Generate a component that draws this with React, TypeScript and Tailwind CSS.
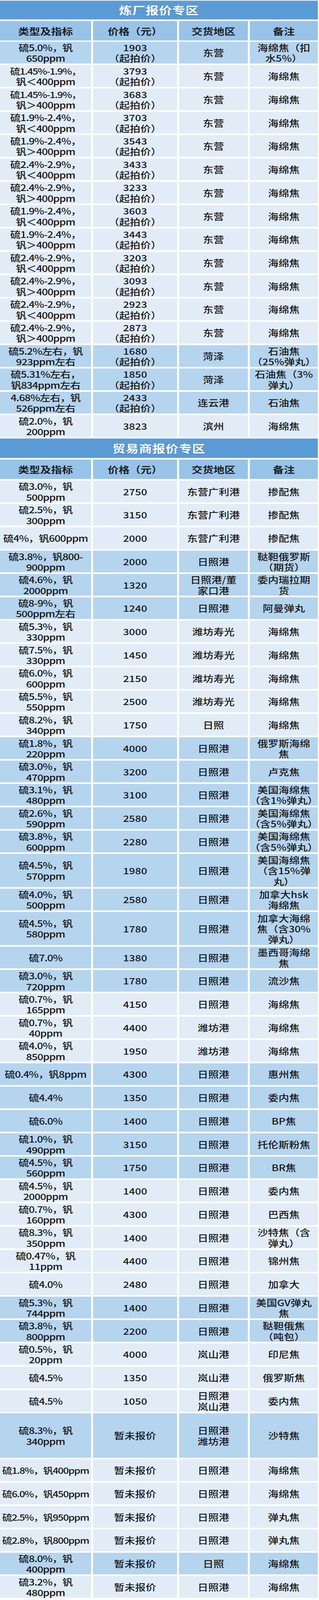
import React, { useLayoutEffect, useState } from 'react';

type Tone = 'm' | 'l';
type Row = { a: string[]; b: string[]; c: string[]; d: string[]; t: Tone; h?: 67 | 102 | 137 };

const QP = '（起拍价）';
const NA = ['暂未报价'];
const FULL_H = 4937;

const r = (a: string[], b: string[], c: string[], d: string[], t: Tone, h?: 67 | 102 | 137): Row => ({ a, b, c, d, t, h });

const refinery: Row[] = [
  r(['硫5.0%，钒', '650ppm'], ['1903', QP], ['东营'], ['海绵焦（扣', '水5%）'], 'm'),
  r(['硫1.45%-1.9%，', '钒＜400ppm'], ['3793', QP], ['东营'], ['海绵焦'], 'l'),
  r(['硫1.45%-1.9%，', '钒＞400ppm'], ['3683', QP], ['东营'], ['海绵焦'], 'l'),
  r(['硫1.9%-2.4%，', '钒＜400ppm'], ['3703', QP], ['东营'], ['海绵焦'], 'l'),
  r(['硫1.9%-2.4%，', '钒＞400ppm'], ['3543', QP], ['东营'], ['海绵焦'], 'l'),
  r(['硫2.4%-2.9%，', '钒＜400ppm'], ['3433', QP], ['东营'], ['海绵焦'], 'l'),
  r(['硫2.4%-2.9%，', '钒＞400ppm'], ['3233', QP], ['东营'], ['海绵焦'], 'l'),
  r(['硫1.9%-2.4%，', '钒＜400ppm'], ['3603', QP], ['东营'], ['海绵焦'], 'l'),
  r(['硫1.9%-2.4%，', '钒＞400ppm'], ['3443', QP], ['东营'], ['海绵焦'], 'l'),
  r(['硫2.4%-2.9%，', '钒＜400ppm'], ['3203', QP], ['东营'], ['海绵焦'], 'l'),
  r(['硫2.4%-2.9%，', '钒＞400ppm'], ['3093', QP], ['东营'], ['海绵焦'], 'l'),
  r(['硫2.4%-2.9%，', '钒＜400ppm'], ['2923', QP], ['东营'], ['海绵焦'], 'l'),
  r(['硫2.4%-2.9%，', '钒＞400ppm'], ['2873', QP], ['东营'], ['海绵焦'], 'l'),
  r(['硫5.2%左右，钒', '923ppm左右'], ['1680', QP], ['菏泽'], ['石油焦', '（25%弹丸）'], 'm'),
  r(['硫5.31%左右，', '钒834ppm左右'], ['1850', QP], ['菏泽'], ['石油焦（3%', '弹丸）'], 'm'),
  r(['4.68%左右，钒', '526ppm左右'], ['2433', QP], ['连云港'], ['石油焦'], 'm'),
  r(['硫2.0%，钒', '200ppm'], ['3823'], ['滨州'], ['海绵焦'], 'l'),
];

const RZ = ['日照港'];

const trader: Row[] = [
  r(['硫3.0%，钒', '500ppm'], ['2750'], ['东营广利港'], ['掺配焦'], 'l'),
  r(['硫2.5%，钒', '300ppm'], ['3150'], ['东营广利港'], ['掺配焦'], 'l'),
  r(['硫4%，钒600ppm'], ['2000'], ['东营广利港'], ['掺配焦'], 'l'),
  r(['硫3.8%，钒800-', '900ppm'], ['2000'], RZ, ['鞑靼俄罗斯', '（期货）'], 'm'),
  r(['硫4.6%，钒', '2000ppm'], ['1320'], ['日照港/董', '家口港'], ['委内瑞拉期', '货'], 'm'),
  r(['硫8-9%，钒', '500ppm左右'], ['1240'], RZ, ['阿曼弹丸'], 'm'),
  r(['硫5.3%，钒', '330ppm'], ['3000'], ['潍坊寿光'], ['海绵焦'], 'l'),
  r(['硫7.5%，钒', '330ppm'], ['1450'], ['潍坊寿光'], ['海绵焦'], 'l'),
  r(['硫6.0%，钒', '600ppm'], ['2150'], ['潍坊寿光'], ['海绵焦'], 'l'),
  r(['硫5.5%，钒', '550ppm'], ['2500'], ['潍坊寿光'], ['海绵焦'], 'l'),
  r(['硫8.2%，钒', '340ppm'], ['1750'], ['日照'], ['海绵焦'], 'l'),
  r(['硫1.8%，钒', '220ppm'], ['4000'], RZ, ['俄罗斯海绵', '焦'], 'm'),
  r(['硫3.0%，钒', '470ppm'], ['3200'], RZ, ['卢克焦'], 'm'),
  r(['硫3.1%，钒', '480ppm'], ['3100'], RZ, ['美国海绵焦', '（含1%弹丸）'], 'm'),
  r(['硫2.6%，钒', '590ppm'], ['2580'], RZ, ['美国海绵焦', '（含5%弹丸）'], 'm'),
  r(['硫3.8%，钒', '600ppm'], ['2280'], RZ, ['美国海绵焦', '（含5%弹丸）'], 'm'),
  r(['硫4.5%，钒', '570ppm'], ['1980'], RZ, ['美国海绵焦', '（含15%弹', '丸）'], 'm', 102),
  r(['硫4.0%，钒', '500ppm'], ['2580'], RZ, ['加拿大hsk', '海绵焦'], 'm'),
  r(['硫4.5%，钒', '580ppm'], ['1780'], RZ, ['加拿大海绵', '焦（含30%', '弹丸）'], 'm', 102),
  r(['硫7.0%'], ['1380'], RZ, ['墨西哥海绵', '焦'], 'm'),
  r(['硫3.0%，钒', '720ppm'], ['1780'], RZ, ['流沙焦'], 'm'),
  r(['硫0.7%，钒', '165ppm'], ['4150'], RZ, ['海绵焦'], 'l'),
  r(['硫0.7%，钒', '40ppm'], ['4400'], ['潍坊港'], ['海绵焦'], 'l'),
  r(['硫4.0%，钒', '850ppm'], ['1950'], ['潍坊港'], ['海绵焦'], 'l'),
  r(['硫0.4%，钒8ppm'], ['4300'], RZ, ['惠州焦'], 'm'),
  r(['硫4.4%'], ['1350'], RZ, ['委内焦'], 'm'),
  r(['硫6.0%'], ['1400'], RZ, ['BP焦'], 'm'),
  r(['硫1.0%，钒', '490ppm'], ['3150'], RZ, ['托伦斯粉焦'], 'm'),
  r(['硫4.5%，钒', '560ppm'], ['1750'], RZ, ['BR焦'], 'm'),
  r(['硫4.5%，钒', '2000ppm'], ['1400'], RZ, ['委内焦'], 'l'),
  r(['硫0.7%，钒', '160ppm'], ['4300'], RZ, ['巴西焦'], 'l'),
  r(['硫8.3%，钒', '350ppm'], ['1400'], RZ, ['沙特焦（含', '弹丸）'], 'l'),
  r(['硫0.47%，钒', '11ppm'], ['4400'], RZ, ['锦州焦'], 'l'),
  r(['硫4.0%'], ['2480'], RZ, ['加拿大'], 'l'),
  r(['硫5.3%，钒', '744ppm'], ['1400'], RZ, ['美国GV弹丸', '焦'], 'm'),
  r(['硫3.8%，钒', '800ppm'], ['2200'], RZ, ['鞑靼俄焦', '（吨包）'], 'm'),
  r(['硫0.5%，钒', '20ppm'], ['4000'], ['岚山港'], ['印尼焦'], 'l'),
  r(['硫4.5%'], ['1350'], ['岚山港'], ['俄罗斯焦'], 'l'),
  r(['硫4.5%'], ['1050'], ['日照港', '岚山港'], ['委内焦'], 'l'),
  r(['硫8.3%，钒', '340ppm'], NA, ['日照港', '潍坊港'], ['沙特焦'], 'm', 137),
  r(['硫1.8%，钒400ppm'], NA, RZ, ['海绵焦'], 'l'),
  r(['硫6.0%，钒450ppm'], NA, RZ, ['海绵焦'], 'l'),
  r(['硫2.5%，钒950ppm'], NA, RZ, ['弹丸焦'], 'l'),
  r(['硫2.8%，钒800ppm'], NA, RZ, ['弹丸焦'], 'l'),
  r(['硫8.0%，钒', '400ppm'], NA, ['日照'], ['海绵焦'], 'm'),
  r(['硫3.2%，钒', '480ppm'], NA, RZ, ['海绵焦'], 'l'),
];

const COLS = 'grid grid-cols-[233px_215px_176px_174px] gap-x-[5px] w-[813px] shrink-0';
const BG: Record<Tone, string> = { m: 'bg-[#b5d4ee]', l: 'bg-[#e1ecf7]' };

function lineClass(l: string, tight?: boolean) {
  if (!tight) return '';
  if (l.length >= 12) return 'text-[26px] tracking-[-1.5px]';
  return 'tracking-[-1px]';
}

function Cell({ lines, bg, tight, h }: { lines: string[]; bg: string; tight?: boolean; h: string }) {
  return (
    <div className={`${h} flex flex-col items-center justify-center text-center ${bg}`}>
      {lines.map((l, i) => (
        <span key={i} className={`block h-[33px] leading-[33px] whitespace-nowrap ${lineClass(l, tight)}`}>
          {l}
        </span>
      ))}
    </div>
  );
}

function DataRow({ row }: { row: Row }) {
  const bg = BG[row.t];
  const h = row.h === 102 ? 'h-[102px]' : row.h === 137 ? 'h-[137px]' : 'h-[67px]';
  return (
    <div className={`${COLS} ${h} text-[27px] font-medium text-[#151515]`}>
      <Cell lines={row.a} bg={bg} h={h} tight />
      <Cell lines={row.b} bg={bg} h={h} />
      <Cell lines={row.c} bg={bg} h={h} />
      <Cell lines={row.d} bg={bg} h={h} />
    </div>
  );
}

function Title({ text, h }: { text: string; h: string }) {
  return (
    <div
      className={`w-[813px] shrink-0 ${h} bg-[#5b9bd5] flex items-center justify-center text-white font-bold text-[33px] leading-[40px] tracking-[1px] [text-shadow:0_1px_2px_rgba(30,70,120,0.45)]`}
    >
      {text}
    </div>
  );
}

function Header() {
  const hb = 'h-[60px] flex items-center justify-center bg-[#98c3e8]';
  return (
    <div className={`${COLS} h-[60px] text-[28px] leading-[36px] font-bold text-[#1a1f26]`}>
      <div className={hb}>类型及指标</div>
      <div className={hb}>价格（元）</div>
      <div className={hb}>交货地区</div>
      <div className={hb}>备注</div>
    </div>
  );
}

export default function App() {
  // The sheet is drawn at its natural 816×4937 size; if the window is shorter,
  // the whole sheet is scaled vertically so that it still fits the window.
  const [scale, setScale] = useState(1);
  useLayoutEffect(() => {
    const vh = window.innerHeight;
    setScale(vh > 0 && vh < FULL_H ? vh / FULL_H : 1);
  }, []);
  return (
    <div className="relative w-[816px] h-screen overflow-hidden bg-white">
      <div
        className="w-[816px] bg-white pt-[2px] flex flex-col origin-top font-['Noto_Sans_CJK_SC','Noto_Sans',sans-serif]"
        style={{ transform: `scaleY(${scale})` }}
      >
        <Title text="炼厂报价专区" h="h-[58px]" />
        <div className="h-[5px] shrink-0" />
        <Header />
        <div className="h-[4px] shrink-0" />
        <div className="flex flex-col gap-[5px]">
          {refinery.map((row, i) => (
            <DataRow key={i} row={row} />
          ))}
        </div>
        <div className="h-[5px] shrink-0" />
        <Title text="贸易商报价专区" h="h-[60px]" />
        <div className="h-[5px] shrink-0" />
        <Header />
        <div className="h-[5px] shrink-0" />
        <div className="flex flex-col gap-[5px]">
          {trader.map((row, i) => (
            <DataRow key={i} row={row} />
          ))}
        </div>
        <div className="h-[7px] shrink-0" />
      </div>
    </div>
  );
}
